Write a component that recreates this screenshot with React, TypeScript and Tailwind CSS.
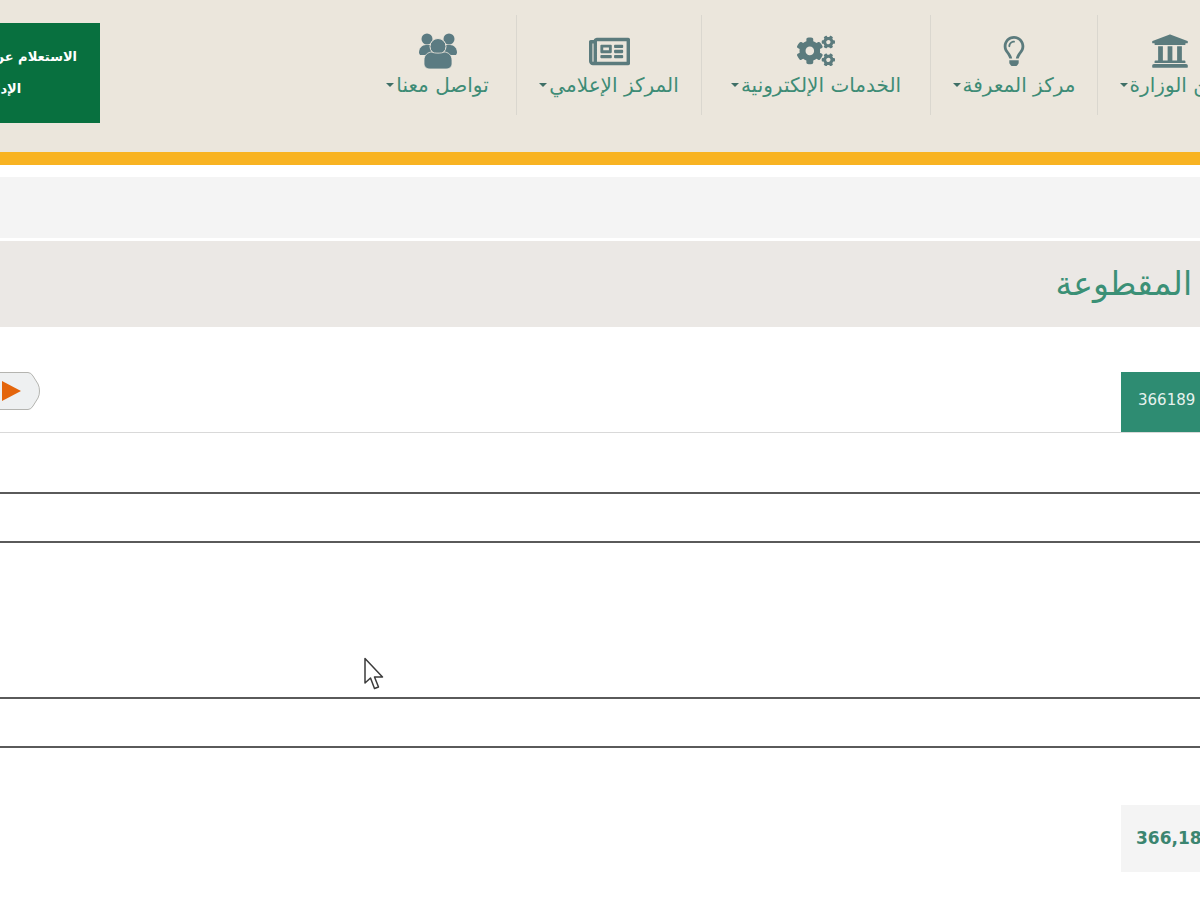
import { FaCogs, FaRegLightbulb, FaRegNewspaper, FaUniversity } from 'react-icons/fa';

const arabicFont = "font-['DejaVu_Sans',sans-serif]";

function UsersIcon() {
  return (
    <svg width="40" height="36" viewBox="0 0 40 36" className="text-[#5b7b82]" fill="currentColor">
      <circle cx="9" cy="6" r="5.500" />
      <circle cx="31" cy="6" r="5.500" />
      <path d="M1 20c0-5 3-8 7-8h6v10H2z" />
      <path d="M39 20c0-5-3-8-7-8h-6v10h12z" />
      <circle cx="20" cy="13.500" r="8" stroke="#ebe6dc" strokeWidth="1" />
      <path d="M6 27c0-5 4-8 8-8 2 1.500 10 1.500 12 0 4 0 8 3 8 8v4c0 3-3 5-6 5H12c-3 0-6-2-6-5z" stroke="#ebe6dc" strokeWidth="0.800" />
    </svg>
  );
}

function NavItem({ label, width, border, icon }: { label: string; width: string; border: boolean; icon: React.ReactNode }) {
  return (
    <div className={`${width} shrink-0 h-[100px] mt-[15px] flex flex-col items-center ${border ? 'border-r border-[#dad7cf]' : ''}`}>
      <div className="h-[36px] mt-[18px] flex items-center justify-center text-[#5b7b7d]">{icon}</div>
      <div className="flex items-center gap-[2px] mt-[3px] text-[#3e8c76] text-[20px] leading-[26px] whitespace-nowrap">
        <span className="w-0 h-0 border-x-[4px] border-x-transparent border-t-[4px] border-t-[#3e6f66]" />
        <span dir="rtl">{label}</span>
      </div>
    </div>
  );
}

function PlayButton() {
  return (
    <svg width="40" height="38" viewBox="0 0 40 38">
      <path d="M-4 .5H28Q31 .5 33 4L38 12Q39.500 15 39.500 19T38 26L33 34Q31 37.500 28 37.500H-4z" fill="#eef0f1" stroke="#b4b4b0" />
      <path d="M2 9L21 19 2 29z" fill="#e4650c" />
    </svg>
  );
}

function CursorIcon() {
  return (
    <svg width="22" height="34" viewBox="0 0 22 34" className="absolute left-[363px] top-[657px]">
      <path d="M2 1.500V26L7.500 21 11.500 31.500 15.500 30 11.500 20H19.500z" fill="#fff" stroke="#3b3b3b" strokeWidth="1.500" strokeLinejoin="round" />
    </svg>
  );
}

export default function App() {
  return (
    <div className={`relative w-[1200px] h-[900px] overflow-hidden bg-white ${arabicFont}`}>
      <div className="h-[152px] bg-[#ebe6dc] flex items-start overflow-hidden">
        <div dir="rtl" className="shrink-0 w-[184px] -ml-[84px] h-[100px] mt-[23px] bg-[#08703f] text-white text-[13px] font-bold leading-[32px] text-center pt-[18px]">
          <div>الاستعلام عن الفواتير</div>
          <div className="pr-[14px]">الإدارة</div>
        </div>
        <div className="flex-1" />
        <div className="flex shrink-0 -mr-[42px]">
          <NavItem label="تواصل معنا" width="w-[158px]" border icon={<UsersIcon />} />
          <NavItem label="المركز الإعلامي" width="w-[185px]" border icon={<FaRegNewspaper size={41} />} />
          <NavItem label="الخدمات الإلكترونية" width="w-[229px]" border icon={<FaCogs size={38} />} />
          <NavItem label="مركز المعرفة" width="w-[167px]" border icon={<FaRegLightbulb size={30} />} />
          <NavItem label="عن الوزارة" width="w-[144px]" border={false} icon={<FaUniversity size={38} />} />
        </div>
      </div>
      <div className="h-[13px] bg-[#f8b322]" />
      <div className="h-[12px] bg-white" />
      <div className="h-[61px] bg-[#f4f4f4]" />
      <div className="h-[3px] bg-white" />
      <div className="h-[86px] bg-[#ebe8e5] flex justify-end items-center overflow-hidden">
        <span dir="rtl" className="shrink-0 -mr-[108px] text-[33px] text-[#3b9076] whitespace-nowrap">
          الفاتورة المقطوعة
        </span>
      </div>
      <div className="mt-[45px] h-[61px] border-b border-[#d9d9d9] flex justify-between items-start overflow-hidden">
        <PlayButton />
        <div className="shrink-0 w-[100px] -mr-[21px] h-[60px] bg-[#2e8c72] text-[#e6f2ee] text-[15px] flex items-center pl-[17px] pb-[3px]">
          366189
        </div>
      </div>
      <div className="h-[61px] border-b-2 border-[#5a5a5a]" />
      <div className="h-[49px] border-b-2 border-[#5a5a5a]" />
      <div className="h-[156px] border-b-2 border-[#5a5a5a]" />
      <div className="h-[49px] border-b-2 border-[#5a5a5a]" />
      <div className="mt-[57px] flex justify-end overflow-hidden">
        <div className="shrink-0 w-[120px] -mr-[41px] h-[67px] bg-[#f4f4f4] text-[#3b8570] text-[17px] font-bold flex items-center pl-[15px]">
          366,189
        </div>
      </div>
      <CursorIcon />
    </div>
  );
}
